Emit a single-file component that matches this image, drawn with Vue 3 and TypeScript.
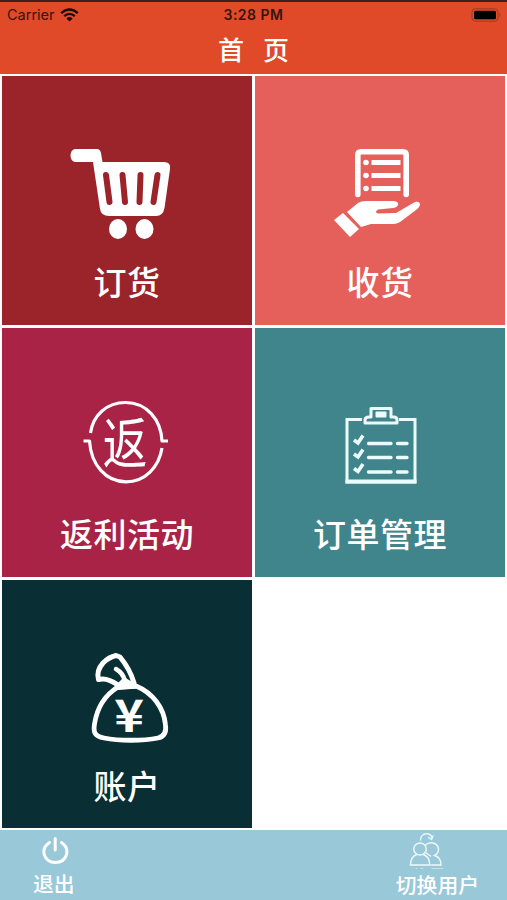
<script setup lang="ts">
interface Tile {
  id: 'order' | 'receive' | 'rebate' | 'manage' | 'account'
  label: string
  viewBox: string
}

const tiles: Tile[] = [
  { id: 'order', label: '订货', viewBox: '67 136 120 110' },
  { id: 'receive', label: '收货', viewBox: '320 136 120 110' },
  { id: 'rebate', label: '返利活动', viewBox: '67 388 120 110' },
  { id: 'manage', label: '订单管理', viewBox: '320 388 120 110' },
  { id: 'account', label: '账户', viewBox: '67 640 120 110' },
]
</script>

<template>
  <div class="screen">
    <header class="header">
      <div class="status">
        <div class="carrier">
          <span>Carrier</span>
          <svg class="wifi" width="19" height="14" viewBox="0 0 19 14" fill="none">
            <path d="M1.2 5.1Q9.5-2 17.8 5.1" stroke="#180b08" stroke-width="2.4" />
            <path d="M4.2 8.2Q9.5 3.6 14.8 8.2" stroke="#180b08" stroke-width="2.3" />
            <path d="M6.4 10.4Q9.5 7.8 12.6 10.4L9.5 13.6Z" fill="#180b08" />
          </svg>
        </div>
        <div class="time">3:28 PM</div>
        <svg class="battery" width="31" height="14" viewBox="0 0 31 14">
          <rect x="1" y="0.8" width="26" height="12.4" rx="3.4" fill="none" stroke="#9c3a22" />
          <rect x="3" y="2.7" width="22" height="8.6" rx="1.6" fill="#000" />
          <path d="M28.6 4.7Q30.4 7 28.6 9.3Z" fill="#8c321e" />
        </svg>
      </div>
      <h1 class="title">首 页</h1>
    </header>

    <main class="grid">
      <button v-for="tile in tiles" :key="tile.id" type="button" class="tile" :class="tile.id">
        <svg class="icon" width="120" height="110" :viewBox="tile.viewBox" fill="none" stroke="#fff" stroke-linecap="round" stroke-linejoin="round">
          <template v-if="tile.id === 'order'">
            <path d="M75 149H97Q100 149 101 153L102.500 162H164Q171 162 170 169L164.500 208Q163 216 156 216H109Q101 216 100 209L93 162H75C69 161 69 150 75 149Z" fill="#fff" stroke="none" />
            <path d="M106 175L109.500 202M122.500 175L125 202M140.500 175L139.500 202M157.500 175L153.500 202" stroke="#9b242b" stroke-width="6" />
            <ellipse cx="118" cy="229" rx="9" ry="10" fill="#fff" stroke="none" />
            <ellipse cx="144.500" cy="229" rx="9" ry="10" fill="#fff" stroke="none" />
          </template>
          <template v-else-if="tile.id === 'receive'">
            <path d="M357.800 194.500V155Q357.800 151.800 361 151.800H403Q406.200 151.800 406.200 155V194.500" stroke-width="5.600" />
            <path d="M371.500 162.500H400.500M371.500 175.500H400.500M371.500 188.500H400.500" stroke-width="5" stroke-linecap="butt" />
            <g fill="#fff" stroke="none">
              <circle cx="366" cy="162.500" r="2.800" />
              <circle cx="366" cy="175.500" r="2.800" />
              <circle cx="366" cy="188.500" r="2.800" />
              <path d="M347 212L358 203Q361 201 366 201H393C400 201 400 207 393 208L378 209.500Q374 212 378 213.500L396 213L415 202Q420 201 420 205Q419 208 416 210L400 222Q397 224 393 224L371 224L361 227Z" />
              <path d="M334 220L343 213L359 229L350 237Z" />
            </g>
          </template>
          <template v-else-if="tile.id === 'rebate'">
            <path d="M90.500 433C93 415 107 402.500 125.500 402.500C147 402.500 161 420 162 441H168M83.500 441H89.500C91 465 106 481.800 126 481.800C145 481.800 159 467 162 448" stroke-width="3.200" stroke-linecap="butt" />
            <text class="glyph" transform="translate(102.800 462.500) scale(.81 1)" font-size="55">返</text>
          </template>
          <template v-else-if="tile.id === 'manage'">
            <g stroke="#ebfafa" stroke-linejoin="miter" stroke-linecap="butt">
              <path d="M362 419.500H347V482H415V419.500H399" stroke-width="3" />
              <path d="M345.500 481.500H416.500" stroke-width="4" />
              <path d="M365 423V420Q365 417 369 417H371V408.500H391V417H394Q397 417 397 420V423Z" stroke-width="3" stroke-linejoin="round" />
              <rect x="375.500" y="411.500" width="11" height="6" rx="1" fill="#ebfafa" stroke="none" />
              <path d="M354 440L358 443L363 435.500M354 454L358 457L363 449.500M354 468.500L358 471.500L363 464" stroke-width="3.600" />
              <path d="M368.500 443.500H391M397.500 443.500H407M368.500 457.500H391M397.500 457.500H407M368.500 472H391M397.500 472H407" stroke-width="3.400" stroke-linecap="round" />
            </g>
          </template>
          <template v-else>
            <path d="M118 685Q107 677 98.500 679.500Q96 671 103 663Q109 657 116 655.500L120 657Q130 669 134 683" stroke-width="5" />
            <path d="M116 669Q123 673 125 681" stroke-width="4.500" />
            <path d="M113 688L119 682L124 677L134 683L141 688L131 689L118 690Z" fill="#fff" stroke="none" />
            <path d="M118 687C105 695 97 708 94.500 724C93 733 95 736 104 738C119 741 143 741 158 738Q167 736 165.500 725C164 708 153 693 136 686Z" stroke-width="4.800" />
            <text class="yen" transform="translate(129 732) scale(1.120 1)" text-anchor="middle" font-size="45">¥</text>
          </template>
        </svg>
        <span class="label">{{ tile.label }}</span>
      </button>
    </main>

    <footer class="footer">
      <button type="button" class="action logout">
        <svg width="30" height="32" viewBox="40 834 30 32" fill="none" stroke="#fff" stroke-width="3" stroke-linecap="round">
          <path d="M55.200 838.500V850" />
          <path d="M49.500 842.500C39.500 849 44 862.500 55.200 862.500C67 862.500 71 849 61.500 842.500" />
        </svg>
        <span>退出</span>
      </button>
      <button type="button" class="action switch">
        <svg width="50" height="38" viewBox="401 832 50 38" fill="none" stroke="#edf7fa" stroke-width="1.500" stroke-linecap="round">
          <ellipse cx="420" cy="849" rx="6.300" ry="6" />
          <path d="M425.500 845C431 840 438.500 844 438.500 849.500Q438.500 853 434.500 855.500C440 857 441 861 441 865H431M416.500 854.500C411 857 410.500 861 410.500 865H429.500C430 861 429 857 423.500 854.500M426 853L430.500 856" />
          <path d="M420.500 840C420.500 832 432 832 432 838.500M428.500 837.500L431.500 839.500L433 836" />
          <path d="M416 868.500H417M421 868.500H423M432 868.500H443" stroke="#c5e1e9" stroke-width="1" />
        </svg>
        <span>切换用户</span>
      </button>
    </footer>
  </div>
</template>

<style>
body {
  margin: 0;
  background: #fff;
}
</style>

<style scoped>
.screen {
  box-sizing: border-box;
  width: 100%;
  height: 900px;
  display: flex;
  flex-direction: column;
  overflow: hidden;
  font-family: "Noto Sans CJK SC", sans-serif;
  color: #fff;
}
.header {
  box-sizing: border-box;
  height: 74px;
  background: #e04a29;
  border-top: 2px solid #3b2021;
}
.status {
  display: grid;
  grid-template-columns: 1fr auto 1fr;
  align-items: center;
  height: 24px;
  padding: 1px 5px 0 7px;
  box-sizing: border-box;
  font: 14.500px/22px Inter, sans-serif;
  color: #35150d;
}
.carrier {
  display: flex;
  align-items: center;
  gap: 5px;
}
.time {
  font-weight: 600;
  font-size: 14px;
  letter-spacing: 0.500px;
  margin-right: 2px;
}
.battery {
  justify-self: end;
}
.title {
  margin: 5px 0 0;
  font-size: 26px;
  font-weight: 500;
  line-height: 36px;
  text-align: center;
  word-spacing: 13px;
}
.grid {
  display: grid;
  grid-template-columns: 250px 250px;
  grid-template-rows: 249px 249px 248px;
  gap: 3px;
  padding: 2px 2px 2px;
  background: #fff;
}
.tile,
.action {
  border: 0;
  margin: 0;
  padding: 0;
  color: inherit;
  font-family: inherit;
  display: flex;
  flex-direction: column;
  align-items: center;
  background: none;
}
.icon {
  margin-top: 60px;
  flex: none;
}
.label {
  margin-top: 11px;
  font-size: 33px;
  line-height: 48px;
  letter-spacing: 0.500px;
  font-weight: 500;
}
.order {
  background: #9b242b;
}
.receive {
  background: #e5605a;
}
.rebate {
  background: #a92346;
}
.manage {
  background: #40858b;
}
.account {
  background: #092e33;
}
.glyph,
.yen {
  fill: #fff;
  stroke: none;
}
.yen {
  font-weight: 700;
}
.footer {
  flex: 1;
  display: flex;
  justify-content: space-between;
  background: #99c8d8;
  padding: 4px 28px 0 33px;
}
.action {
  font-size: 20.800px;
  line-height: 30px;
  font-weight: 500;
}
.logout svg {
  margin: 0 0 2px 3px;
}
.switch {
  align-items: flex-start;
}
.switch svg {
  margin: -2px 0 -1px 5px;
}
</style>
